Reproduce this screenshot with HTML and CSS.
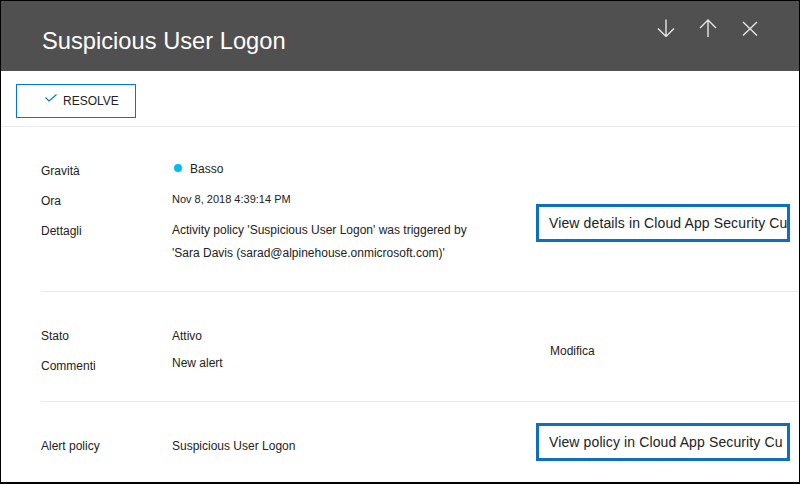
FILE: index.html
```html
<!DOCTYPE html>
<html lang="it">
<head>
<meta charset="utf-8">
<title>Suspicious User Logon</title>
<link rel="stylesheet" href="styles.css">
</head>
<body>
<div class="panel">
  <header class="header">
    <h1 class="title">Suspicious User Logon</h1>
    <div class="actions">
      <svg class="icon" width="18" height="18" viewBox="0 0 18 18"><path d="M9 0.5V17.5M1 9.5L9 17.5L17 9.5" fill="none" stroke="#e6e6e6" stroke-width="1.4"/></svg>
      <svg class="icon" width="18" height="18" viewBox="0 0 18 18"><path d="M9 18V1M1 9L9 1L17 9" fill="none" stroke="#e6e6e6" stroke-width="1.4"/></svg>
      <svg class="icon" width="18" height="18" viewBox="0 0 18 18"><path d="M2 3L16 16.5M16 3L2 16.5" fill="none" stroke="#e6e6e6" stroke-width="1.4"/></svg>
    </div>
  </header>
  <div class="toolbar">
    <button class="resolve">
      <svg class="check" width="12" height="8" viewBox="0 0 12 8"><path d="M0.5 3.5L4 7L11.5 0.5" fill="none" stroke="#0078d4" stroke-width="1.1"/></svg>
      <span>RESOLVE</span>
    </button>
  </div>

  <section class="section s1">
    <div class="fields">
      <div class="label">Gravità</div>
      <div class="value sev"><span class="dot"></span>Basso</div>
      <div class="label">Ora</div>
      <div class="value small">Nov 8, 2018 4:39:14 PM</div>
      <div class="label">Dettagli</div>
      <div class="value multi">Activity policy 'Suspicious User Logon' was triggered by<br>'Sara Davis (sarad@alpinehouse.onmicrosoft.com)'</div>
    </div>
    <div class="aside top">
      <a class="linkbox">View details in Cloud App Security Cu</a>
    </div>
  </section>

  <section class="section s2">
    <div class="fields">
      <div class="label">Stato</div>
      <div class="value">Attivo</div>
      <div class="label">Commenti</div>
      <div class="value raised">New alert</div>
    </div>
    <div class="aside center">
      <span class="edit">Modifica</span>
    </div>
  </section>

  <section class="section s3">
    <div class="fields">
      <div class="label">Alert policy</div>
      <div class="value">Suspicious User Logon</div>
    </div>
    <div class="aside">
      <a class="linkbox">View policy in Cloud App Security Cu</a>
    </div>
  </section>
</div>
</body>
</html>
```

FILE: styles.css
```css
* { box-sizing: border-box; }
html, body { margin: 0; padding: 0; background: #fff; }
body { font-family: "Liberation Sans", Arial, sans-serif; color: #222; }

.panel {
  width: 800px;
  height: 484px;
  border: 1px solid #000;
  border-bottom-width: 2px;
  overflow: hidden;
  display: flex;
  flex-direction: column;
}

.header {
  height: 70px;
  flex: none;
  background: #505050;
  display: flex;
  justify-content: space-between;
  align-items: flex-start;
  padding: 0 40px 0 41px;
}
.title {
  margin: 26px 0 0 0;
  font-weight: normal;
  font-size: 23.7px;
  line-height: 28px;
  color: #fff;
}
.actions {
  display: flex;
  gap: 24px;
  margin-top: 18px;
}
.icon { display: block; }

.toolbar {
  padding: 13px 0 8px 15px;
  border-bottom: 1px solid #eaeaea;
  flex: none;
}
.resolve {
  width: 120px;
  height: 34px;
  border: 1px solid #0078d4;
  background: #fff;
  display: flex;
  align-items: center;
  padding: 0 0 0 28px;
  gap: 6px;
  font-family: "Liberation Sans", Arial, sans-serif;
  font-size: 12px;
  color: #222;
}
.check { display: block; margin-top: -6px; }

.section {
  margin-left: 40px;
  display: flex;
  border-bottom: 1px solid #eaeaea;
  flex: none;
}
.section:last-child { border-bottom: none; }
.s1 { padding: 29px 0 26px 0; }
.s2 { padding: 29px 0 20px 0; }
.s3 { padding: 21px 0 0 0; align-items: flex-end; }

.fields {
  width: 495px;
  display: grid;
  grid-template-columns: 131px 364px;
  grid-auto-rows: 30px;
  font-size: 12px;
  line-height: 30px;
}
.s1 .fields { grid-template-rows: 30px 30px auto; }
.label { white-space: nowrap; }
.value { white-space: nowrap; }
.sev { display: flex; align-items: center; line-height: 26px; height: 26px; }
.dot {
  width: 8px;
  height: 8px;
  border-radius: 50%;
  background: #00bcf2;
  margin: 0 8px 2px 2px;
}
.small { font-size: 11px; line-height: 26px; }
.multi { line-height: 23px; padding-top: 3px; }
.raised { line-height: 24px; }

.aside { display: flex; }
.aside.top { align-items: flex-start; }
.s1 .linkbox { margin-top: 48px; }
.aside.center { align-items: center; }

.linkbox {
  display: block;
  width: 254px;
  height: 38px;
  border: 3px solid #106ebe;
  padding-left: 10px;
  font-size: 14px;
  line-height: 32px;
  letter-spacing: 0.12px;
  white-space: nowrap;
  overflow: hidden;
  color: #222;
}
.edit {
  padding-left: 14px;
  font-size: 12px;
  line-height: 30px;
}
```
